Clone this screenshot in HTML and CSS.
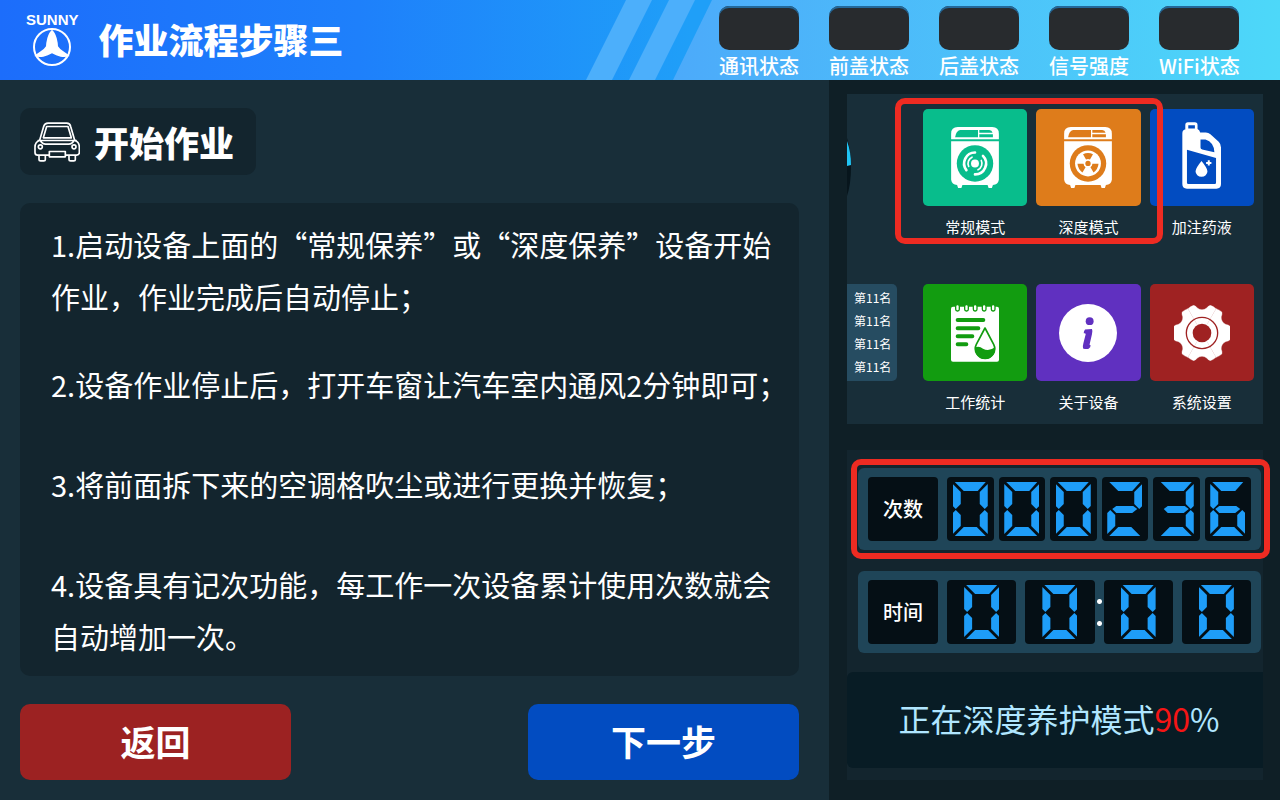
FILE: index.html
```html
<!DOCTYPE html>
<html lang="zh-CN">
<head>
<meta charset="utf-8">
<meta name="viewport" content="width=device-width, initial-scale=1">
<title>作业流程步骤三</title>
<link rel="stylesheet" href="styles.css">
</head>
<body>
<header class="topbar">
  <svg class="topbar-stripes" viewBox="0 0 694 80" preserveAspectRatio="none" aria-hidden="true">
    <defs>
      <linearGradient id="sky" x1="0" x2="1" y1="0" y2="0">
        <stop offset="0" stop-color="#4caafa"/>
        <stop offset="1" stop-color="#4dd8f9"/>
      </linearGradient>
    </defs>
    <path fill="#4caffb" d="M40 0H66L26 80H0Z"/>
    <path fill="#4caffb" d="M83 0H109L69 80H43Z"/>
    <path fill="url(#sky)" d="M126 0H694V80H87Z"/>
  </svg>
  <div class="brand">
    <span class="brand-name">SUNNY</span>
    <svg class="brand-mark" viewBox="0 0 114 114" aria-hidden="true">
      <circle cx="57" cy="57" r="54" fill="none" stroke="#fff" stroke-width="6"/>
      <path fill="#fff" d="M57 5Q66 12 71 30Q75 46 75 55Q79 62 91 70Q103 78 110 84Q97 89 83 86Q69 83 57 76Q45 83 31 86Q17 89 4 84Q11 78 23 70Q35 62 39 55Q39 46 43 30Q48 12 57 5Z"/>
    </svg>
  </div>
  <h1 class="title">作业流程步骤三</h1>
  <ul class="signals">
    <li class="signal"><span class="lamp"></span>通讯状态</li>
    <li class="signal"><span class="lamp"></span>前盖状态</li>
    <li class="signal"><span class="lamp"></span>后盖状态</li>
    <li class="signal"><span class="lamp"></span>信号强度</li>
    <li class="signal"><span class="lamp"></span>WiFi状态</li>
  </ul>
</header>

<div class="layout">
  <main class="work">
    <h2 class="stage">
      <svg class="stage-icon" viewBox="101 365 138 119" fill="none" stroke="#fff" stroke-width="5" stroke-linejoin="round" aria-hidden="true">
        <path d="M118 419L130 378Q133 368 143 368H199Q209 368 211 378L223 419"/>
        <path d="M139 378H203L213 412H129Z"/>
        <path d="M118 419Q104 424 104 440V456Q104 464 112 464H146M196 464H229Q237 464 237 456V440Q237 424 223 419"/>
        <path d="M112 420H229M120 420Q126 431 136 431H205Q215 431 221 420"/>
        <circle cx="120" cy="439" r="6"/>
        <circle cx="221" cy="439" r="6"/>
        <path d="M147 453H195V469H147Z"/>
        <path d="M116 464V476Q116 481 121 481H130Q135 481 135 476V464M206 464V476Q206 481 211 481H220Q225 481 225 476V464"/>
      </svg>
      开始作业
    </h2>

    <section class="steps">
      <p class="step">1.启动设备上面的“常规保养”或“深度保养”设备开始<br>作业，作业完成后自动停止；</p>
      <p class="step step-near">2.设备作业停止后，打开车窗让汽车室内通风2分钟即可；</p>
      <p class="step">3.将前面拆下来的空调格吹尘或进行更换并恢复；</p>
      <p class="step">4.设备具有记次功能，每工作一次设备累计使用次数就会<br>自动增加一次。</p>
    </section>

    <div class="actions">
      <button class="action action-back" type="button">返回</button>
      <button class="action action-next" type="button">下一步</button>
    </div>
  </main>

  <aside class="side">
    <section class="menu">
      <div class="menu-edge">
        <div class="gauge">
          <svg class="gauge-arc" viewBox="0 0 5 60" aria-hidden="true">
            <path fill="#07151c" d="M0 0Q4 12 4 29Q4 46 0 58Z"/>
            <path fill="#20c4f4" d="M0 3Q4 14 4 27L0 28Z"/>
          </svg>
        </div>
        <ul class="ranks">
          <li>第11名</li>
          <li>第11名</li>
          <li>第11名</li>
          <li>第11名</li>
        </ul>
      </div>
      <div class="tiles">
        <button class="tile" type="button">
          <span class="tile-face green-mint">
            <svg width="48" height="61" viewBox="333 125 144 184" aria-hidden="true">
              <path fill="#fff" fill-rule="evenodd" d="M333 162V145Q333 125 353 125H457Q477 125 477 145V162ZM345 156H414V134H360Q348 136 345 156ZM418 134V142H458Q456 134 448 134ZM418 147V156H459V147Z"/>
              <path fill="#fff" d="M333 168H477V284Q475 298 459 300L456 309H446L443 300H367L364 309H354L351 300Q335 298 333 284Z"/>
              <circle cx="405" cy="235" r="55" fill="#08bd8c"/>
              <circle cx="405" cy="235" r="12" fill="#fff"/>
              <path fill="none" stroke="#fff" stroke-width="8" stroke-linecap="round" d="M405 202A33 33 0 0 0 379 255M429 212A33 33 0 0 1 405 268"/>
              <path fill="none" stroke="#fff" stroke-width="5" stroke-linecap="round" d="M396 216A21 21 0 0 0 386 244M424 226A21 21 0 0 1 414 254"/>
            </svg>
          </span>
          常规模式
        </button>
        <button class="tile" type="button">
          <span class="tile-face orange">
            <svg width="48" height="61" viewBox="333 125 144 184" aria-hidden="true">
              <path fill="#fff" fill-rule="evenodd" d="M333 162V145Q333 125 353 125H457Q477 125 477 145V162ZM345 156H414V134H360Q348 136 345 156ZM418 134V142H458Q456 134 448 134ZM418 147V156H459V147Z"/>
              <path fill="#fff" d="M333 168H477V284Q475 298 459 300L456 309H446L443 300H367L364 309H354L351 300Q335 298 333 284Z"/>
              <circle cx="405" cy="235" r="55" fill="#de7c1b"/>
              <circle cx="405" cy="235" r="39" fill="#fff"/>
              <g fill="#de7c1b" transform="translate(405 235)">
                <circle r="8"/>
                <path id="blade" d="M-6 -12L-15 -28Q0 -35 15 -28L6 -12Q0 -15 -6 -12Z"/>
                <use href="#blade" transform="rotate(120)"/>
                <use href="#blade" transform="rotate(240)"/>
              </g>
            </svg>
          </span>
          深度模式
        </button>
        <button class="tile" type="button">
          <span class="tile-face tile-face-tall blue">
            <svg width="39" height="67" viewBox="1027 108 118 201" aria-hidden="true">
              <path fill="#fff" fill-rule="evenodd" d="M1037 130V116Q1037 108 1045 108H1066Q1074 108 1074 116V128Q1081 131 1082 139H1099Q1107 139 1113 144L1138 167Q1145 174 1145 184V295Q1145 309 1131 309H1042Q1028 309 1028 295V142Q1028 131 1037 130ZM1046 117V127H1066V117ZM1083 160V184Q1083 189 1088 190L1125 199Q1124 168 1098 160ZM1042 191V291Q1042 295 1046 295H1126Q1130 295 1130 291V216Z"/>
              <path fill="#fff" d="M1086 225Q1104 247 1104 256A18 17 0 0 1 1068 256Q1068 247 1086 225ZM1105 223H1111V228H1116V234H1111V239H1105V234H1100V228H1105Z"/>
            </svg>
          </span>
          加注药液
        </button>
        <button class="tile" type="button">
          <span class="tile-face green">
            <svg width="48" height="58" viewBox="333 102 144 174" aria-hidden="true">
              <rect x="333" y="110" width="144" height="165" rx="6" fill="#fff"/>
              <g fill="#fff" stroke="#129c10" stroke-width="4">
                <rect x="347" y="104" width="11" height="19" rx="5"/>
                <rect x="374" y="104" width="11" height="19" rx="5"/>
                <rect x="400" y="104" width="11" height="19" rx="5"/>
                <rect x="427" y="104" width="11" height="19" rx="5"/>
                <rect x="454" y="104" width="11" height="19" rx="5"/>
              </g>
              <path stroke="#129c10" stroke-width="12" stroke-linecap="round" d="M353 150H430M353 175H415M353 199H397M353 223H379"/>
              <path fill="#fff" stroke="#fff" stroke-width="14" d="M435 174L460 223A28 28 0 1 1 410 223Z"/>
              <path fill="#fff" stroke="#129c10" stroke-width="5" stroke-linejoin="round" d="M435 174L461 223A29 29 0 1 1 409 223Z"/>
              <path fill="#129c10" d="M406 232Q418 227 429 236Q446 246 465 232A30 30 0 1 1 406 232Z"/>
            </svg>
          </span>
          工作统计
        </button>
        <button class="tile" type="button">
          <span class="tile-face purple">
            <svg width="58" height="58" viewBox="657 98 176 176" aria-hidden="true">
              <circle cx="745" cy="186" r="88" fill="#fff"/>
              <circle cx="750" cy="150" r="12" fill="#6030c0"/>
              <path fill="#6030c0" d="M736 175Q746 174 757 174Q760 180 757 190L750 220Q749 223 753 223Q753 229 747 234Q739 236 730 233Q728 227 731 217L738 190Q738 186 732 187Q732 180 736 175Z"/>
            </svg>
          </span>
          关于设备
        </button>
        <button class="tile" type="button">
          <span class="tile-face red">
            <svg width="56" height="56" viewBox="-84 -84 168 168" aria-hidden="true">
              <g fill="#fff" stroke="#fff">
                <path id="tooth" d="M0 0L-42 -73Q-34 -80 -25 -83Q-18 -81 -14 -75Q-8 -70 0 -70Q8 -70 14 -75Q18 -81 25 -83Q34 -80 42 -73Z"/>
                <use href="#tooth" transform="rotate(60)"/>
                <use href="#tooth" transform="rotate(120)"/>
                <use href="#tooth" transform="rotate(180)"/>
                <use href="#tooth" transform="rotate(240)"/>
                <use href="#tooth" transform="rotate(300)"/>
              </g>
              <circle r="47" fill="none" stroke="#9f2222" stroke-width="4"/>
              <circle r="28" fill="#9f2222"/>
            </svg>
          </span>
          系统设置
        </button>
        <span class="marker marker-modes"></span>
      </div>
    </section>

    <section class="monitor">
      <div class="meter">
        <span class="meter-label">次数</span>
        <div class="cells cells-count" role="img" aria-label="000236">
          <span class="cell"><span class="digit"><i class="seg a"></i><i class="seg b"></i><i class="seg c"></i><i class="seg d"></i><i class="seg e"></i><i class="seg f"></i></span></span>
          <span class="cell"><span class="digit"><i class="seg a"></i><i class="seg b"></i><i class="seg c"></i><i class="seg d"></i><i class="seg e"></i><i class="seg f"></i></span></span>
          <span class="cell"><span class="digit"><i class="seg a"></i><i class="seg b"></i><i class="seg c"></i><i class="seg d"></i><i class="seg e"></i><i class="seg f"></i></span></span>
          <span class="cell"><span class="digit"><i class="seg a"></i><i class="seg b"></i><i class="seg g"></i><i class="seg e"></i><i class="seg d"></i></span></span>
          <span class="cell"><span class="digit"><i class="seg a"></i><i class="seg b"></i><i class="seg g"></i><i class="seg c"></i><i class="seg d"></i></span></span>
          <span class="cell"><span class="digit"><i class="seg a"></i><i class="seg f"></i><i class="seg g"></i><i class="seg c"></i><i class="seg d"></i><i class="seg e"></i></span></span>
        </div>
        <span class="marker marker-count"></span>
      </div>
      <div class="meter">
        <span class="meter-label">时间</span>
        <div class="cells cells-time" role="img" aria-label="00:00">
          <span class="cell"><span class="digit"><i class="seg a"></i><i class="seg b"></i><i class="seg c"></i><i class="seg d"></i><i class="seg e"></i><i class="seg f"></i></span></span>
          <span class="cell"><span class="digit"><i class="seg a"></i><i class="seg b"></i><i class="seg c"></i><i class="seg d"></i><i class="seg e"></i><i class="seg f"></i></span></span>
          <span class="colon"></span>
          <span class="cell"><span class="digit"><i class="seg a"></i><i class="seg b"></i><i class="seg c"></i><i class="seg d"></i><i class="seg e"></i><i class="seg f"></i></span></span>
          <span class="cell"><span class="digit"><i class="seg a"></i><i class="seg b"></i><i class="seg c"></i><i class="seg d"></i><i class="seg e"></i><i class="seg f"></i></span></span>
        </div>
      </div>
      <p class="progress">正在深度养护模式<span class="percent">90</span>%</p>
    </section>
  </aside>
</div>
</body>
</html>
```
FILE: styles.css
```css
* {
  box-sizing: border-box;
}

body {
  margin: 0;
  min-height: 100vh;
  display: flex;
  flex-direction: column;
  background: #182e39;
  color: #fff;
  font-family: "Noto Sans CJK SC", sans-serif;
}

h1, h2, p, ul {
  margin: 0;
  padding: 0;
}

ul {
  list-style: none;
}

button {
  border: 0;
  padding: 0;
  color: inherit;
  font-family: inherit;
  cursor: pointer;
}

svg {
  display: block;
}

/* top bar */
.topbar {
  position: relative;
  display: flex;
  align-items: flex-start;
  height: 80px;
  padding: 0 41px 0 26px;
  background: linear-gradient(90deg, #1c6dfb 0%, #1e80fb 28%, #1f9ff8 54%);
}

.topbar-stripes {
  position: absolute;
  top: 0;
  right: 0;
  width: 694px;
  height: 100%;
}

.brand {
  display: flex;
  flex-direction: column;
  align-items: center;
  padding-top: 11px;
}

.brand-name {
  font: bold 15px/17px "Liberation Sans", Arial, sans-serif;
}

.brand-mark {
  width: 38px;
  height: 38px;
}

.title {
  margin-left: 20px;
  font-size: 35px;
  font-weight: 900;
  line-height: 78px;
  white-space: nowrap;
}

.signals {
  position: relative;
  display: flex;
  gap: 30px;
  margin-left: auto;
  padding-top: 6px;
}

.signal {
  width: 80px;
  font-size: 20px;
  font-weight: 500;
  line-height: 32px;
  text-align: center;
  white-space: nowrap;
}

.lamp {
  display: block;
  height: 44px;
  border-radius: 10px;
  background: #282b2e;
  box-shadow: inset 0 2px 0 #23689a;
}

/* two-column body */
.layout {
  flex: 1;
  display: grid;
  grid-template-columns: 829fr 451fr;
}

.work {
  display: flex;
  flex-direction: column;
  align-items: flex-start;
  gap: 28px;
  padding: 28px 30px 20px 20px;
}

.stage {
  display: flex;
  align-items: center;
  gap: 14px;
  padding: 0 22px 0 14px;
  border-radius: 10px;
  background: #13252e;
  font-size: 35px;
  font-weight: 900;
  line-height: 67px;
}

.stage-icon {
  width: 46px;
  height: 40px;
}

.steps {
  flex: 1;
  align-self: stretch;
  padding: 15px 0 12px 31px;
  border-radius: 10px;
  background: #13252e;
  font-size: 29px;
  line-height: 52px;
}

.step + .step {
  margin-top: 48px;
}

.step + .step-near {
  margin-top: 36px;
}

.actions {
  align-self: stretch;
  display: flex;
  justify-content: space-between;
}

.action {
  width: 271px;
  height: 76px;
  padding-bottom: 4px;
  border-radius: 10px;
  font-size: 35px;
  font-weight: 700;
}

.action-back {
  background: #9c2222;
}

.action-next {
  background: #024cc1;
}

.side {
  display: flex;
  flex-direction: column;
  gap: 26px;
  padding: 14px 17px 20px 18px;
  background: #0f1f26;
}

/* menu preview */
.menu {
  display: grid;
  grid-template-columns: 50px 1fr;
  gap: 26px;
  padding: 15px 9px 10px 0;
  background: #182e39;
}

.menu-edge {
  display: grid;
  grid-template-rows: 130px 130px;
  row-gap: 45px;
  align-items: start;
}

.gauge {
  padding-top: 29px;
}

.gauge-arc {
  width: 5px;
  height: 60px;
}

.ranks {
  height: 97px;
  padding: 2px 0 3px 7px;
  border-radius: 0 5px 5px 0;
  background: #264c61;
  font-size: 12px;
  line-height: 23px;
}

.tiles {
  position: relative;
  display: grid;
  grid-template-columns: repeat(3, 1fr);
  gap: 45px 9px;
}

.tile {
  display: flex;
  flex-direction: column;
  align-items: center;
  gap: 10px;
  padding-bottom: 1px;
  background: none;
  font-size: 15px;
  line-height: 22px;
}

.tile-face {
  display: flex;
  align-items: center;
  justify-content: center;
  align-self: stretch;
  height: 97px;
  border-radius: 5px;
}

.tile-face-tall {
  padding-bottom: 5px;
}

.green-mint { background: #08bd8c; }
.orange { background: #de7c1b; }
.blue { background: #024cc1; }
.green { background: #129c10; }
.purple { background: #6030c0; }
.red { background: #9f2222; }

.marker {
  position: absolute;
  border: 6px solid #ee2b22;
  border-radius: 10px;
  pointer-events: none;
}

.marker-modes {
  top: -11px;
  left: -28px;
  width: calc(66% + 50px);
  height: 146px;
}

.marker-count {
  inset: -9px -9px -9px -7px;
}

/* counters */
.monitor {
  display: flex;
  flex-direction: column;
  padding: 18px 0 12px;
  background: #13252e;
}

.meter {
  position: relative;
  display: flex;
  gap: 9px;
  margin: 0 2px 21px 11px;
  padding: 9px 10px;
  border-radius: 6px;
  background: #1f4558;
}

.meter-label {
  width: 70px;
  border-radius: 4px;
  background: #050f15;
  font-size: 20px;
  font-weight: 500;
  line-height: 64px;
  text-align: center;
}

.cells {
  flex: 1;
  display: flex;
}

.cells-count {
  gap: 5px;
}

.cells-time {
  gap: 9px;
}

.cell {
  flex: 1;
  display: flex;
  align-items: center;
  justify-content: center;
  height: 64px;
  border-radius: 4px;
  background: #050f15;
}

.colon {
  align-self: center;
  width: 5px;
  height: 27px;
  margin: 0 -7px;
  background:
    radial-gradient(circle, #fff 2px, transparent 3px) top / 5px 5px no-repeat,
    radial-gradient(circle, #fff 2px, transparent 3px) bottom / 5px 5px no-repeat;
}

/* seven-segment digit: every segment is a clip of the same 35x54 box */
.digit {
  display: grid;
  width: 35px;
  height: 54px;
}

.seg {
  grid-area: 1 / 1;
  background: #1e9df8;
}

.a { clip-path: polygon(2px 0, 33px 0, 25px 9px, 11px 9px); }
.b { clip-path: polygon(35px 2px, 35px 24px, 32px 27px, 27px 22px, 27px 10px); }
.c { clip-path: polygon(32px 28px, 35px 31px, 35px 52px, 27px 44px, 27px 33px); }
.d { clip-path: polygon(11px 45px, 24px 45px, 33px 54px, 2px 54px); }
.e { clip-path: polygon(3px 28px, 8px 33px, 8px 44px, 0 52px, 0 31px); }
.f { clip-path: polygon(0 2px, 8px 10px, 8px 22px, 3px 27px, 0 24px); }
.g { clip-path: polygon(5px 27px, 9px 24px, 26px 24px, 30px 27px, 25px 31px, 9px 31px); }

.progress {
  margin-top: -2px;
  padding: 0 0 4px 8px;
  border-radius: 6px 0 0 6px;
  background: #081c25;
  color: #b0e6ff;
  font-size: 32px;
  line-height: 92px;
  text-align: center;
}

.percent {
  color: #f51515;
}
```
